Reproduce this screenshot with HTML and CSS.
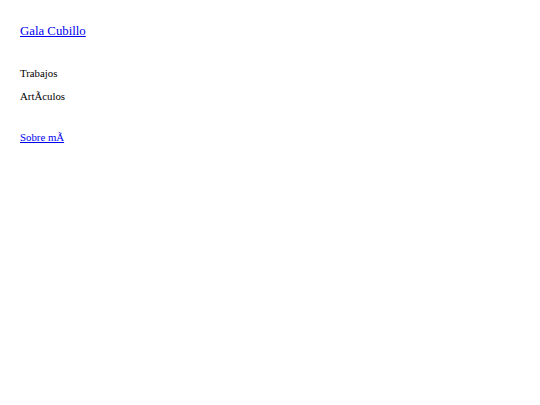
FILE: index.html
```html
<!DOCTYPE html>
<html>
<head>
<meta charset="utf-8">
<link rel="stylesheet" href="styles.css">
</head>
<body>
<header class="site">
  <a class="brand" href="#">Gala Cubillo</a>
</header>
<nav class="menu">
  <div class="item">Trabajos</div>
  <div class="item">Art&Atilde;&shy;culos</div>
</nav>
<div class="about">
  <a class="link" href="#">Sobre m&Atilde;&shy;</a>
</div>
</body>
</html>
```
FILE: styles.css
```css
html, body {
  margin: 0;
  padding: 0;
  background: #fff;
}
body {
  font-family: "Liberation Serif", "Times New Roman", Times, serif;
  font-size: 10.8px;
  color: #000;
  padding: 20px 20px;
}
.brand {
  font-size: 12.8px;
  color: #0000ee;
  text-decoration: underline;
  line-height: 22px;
  display: inline-block;
}
.menu {
  margin-top: 25px;
  display: flex;
  flex-direction: column;
  gap: 10px;
}
.item {
  line-height: 13px;
}
.about {
  margin-top: 28px;
}
.link {
  color: #0000ee;
  text-decoration: underline;
}
```
